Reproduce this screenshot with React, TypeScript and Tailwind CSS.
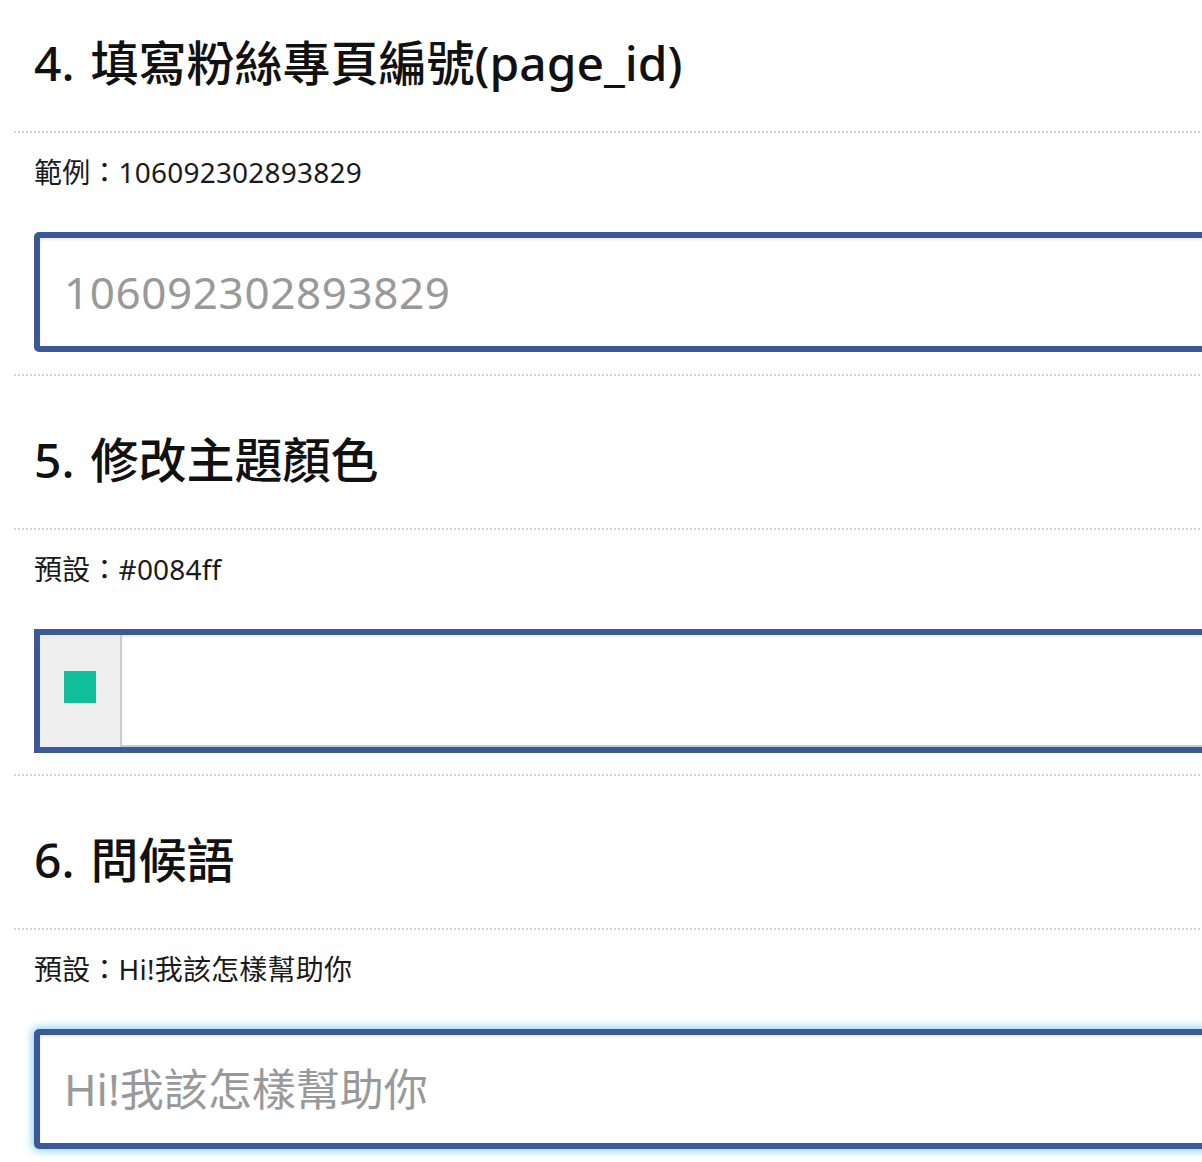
import type { ReactNode } from "react";

const font = { fontFamily: '"Noto Sans", "Noto Sans CJK TC", sans-serif' };

function Rule() {
  return <div className="h-0 border-t-2 border-dotted border-[#d3d3d3]" />;
}

function Section({ num, title, hint, children }: { num: number; title: string; hint: string; children: ReactNode }) {
  return (
    <section>
      <h2 className="pl-5 text-[48px] leading-[56px] font-medium text-[#111]">
        <span className="mr-[16px]">{num}.</span>
        {title}
      </h2>
      <div className="mt-10">
        <Rule />
      </div>
      <p className="mt-[19px] pl-5 text-[28px] leading-[40px] tracking-[0.2px] text-[#1a1a1a]">{hint}</p>
      <div className="mt-10 pl-5">{children}</div>
    </section>
  );
}

export default function App() {
  return (
    <div className="w-[1202px] h-[1162px] overflow-hidden bg-white" style={font}>
      <div className="w-[1260px] pl-[14px]">
        <div className="pt-[35px]" />
        <Section num={4} title="填寫粉絲專頁編號(page_id)" hint="範例：106092302893829">
          <input
            className="w-full h-[120px] rounded-[5px] border-[6px] border-[#3b5998] px-6 text-[44px] tracking-[0.6px] text-[#333] shadow-[inset_0_2px_3px_rgba(0,0,0,0.08)] outline-none placeholder:text-[#999]"
            placeholder="106092302893829"
          />
        </Section>
        <div className="mt-[22px]">
          <Rule />
        </div>

        <div className="pt-[56px]" />
        <Section num={5} title="修改主題顏色" hint="預設：#0084ff">
          <div className="flex h-[124px] border-[6px] border-[#3b5998]">
            <div className="flex w-[82px] shrink-0 items-center justify-center border-r-2 border-[#cccccc] bg-[#eeeeee] pb-2">
              <span className="block h-8 w-8 bg-[#10bd9d]" />
            </div>
            <input className="flex-1 border-b-2 border-[#cccccc] shadow-[inset_0_2px_3px_rgba(0,0,0,0.08)] outline-none" />
          </div>
        </Section>
        <div className="mt-[21px]">
          <Rule />
        </div>

        <div className="pt-[56px]" />
        <Section num={6} title="問候語" hint="預設：Hi!我該怎樣幫助你">
          <input
            className="w-full h-[120px] rounded-[5px] border-[6px] border-[#3b5998] px-6 text-[44px] text-[#333] shadow-[inset_0_2px_3px_rgba(0,0,0,0.08),0_0_8px_2px_rgba(102,200,240,0.75)] outline-none placeholder:text-[#999]"
            placeholder="Hi!我該怎樣幫助你"
          />
        </Section>
      </div>
    </div>
  );
}
